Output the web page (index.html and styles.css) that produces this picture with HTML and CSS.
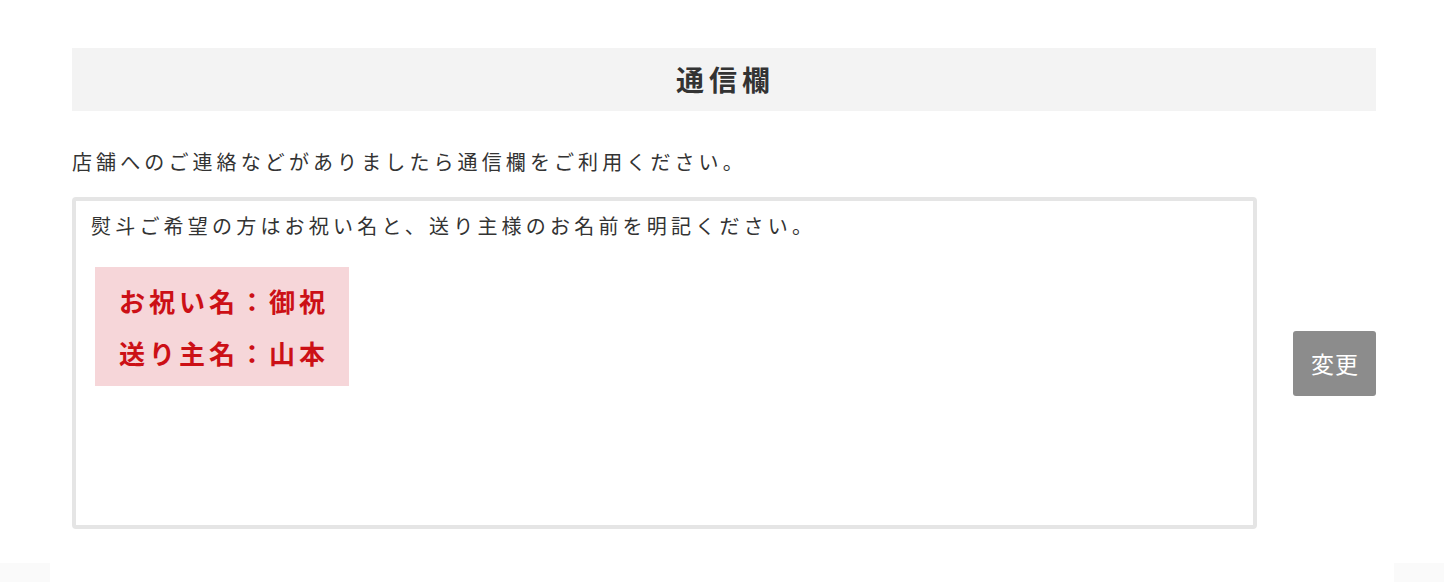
FILE: index.html
```html
<!DOCTYPE html>
<html lang="ja">
<head>
    <meta charset="UTF-8">
    <meta name="viewport" content="width=device-width, initial-scale=1.0">
    <title>通信欄</title>
    <link rel="stylesheet" href="styles.css">
</head>
<body>
    <div class="section">
        <h2 class="section-title">通信欄</h2>
        <p class="lead">店舗へのご連絡などがありましたら通信欄をご利用ください。</p>
        <div class="message-row">
            <div class="message-box">
                <p class="hint">熨斗ご希望の方はお祝い名と、送り主様のお名前を明記ください。</p>
                <div class="sample">
                    <p>お祝い名：御祝</p>
                    <p>送り主名：山本</p>
                </div>
            </div>
            <button class="change-btn">変更</button>
        </div>
    </div>
    <div class="foot">
        <span class="foot-block"></span>
        <span class="foot-block"></span>
    </div>
</body>
</html>
```

FILE: styles.css
```css
body{
    margin: 0;
    background: #fff;
    color: #333;
    font-family: "Noto Sans CJK JP", "Noto Sans", sans-serif;
}
.section{
    width: 1304px;
    margin: 48px 0 0 72px;
}
.section-title{
    margin: 0;
    height: 63px;
    line-height: 63px;
    background: #f3f3f3;
    text-align: center;
    font-size: 28px;
    font-weight: bold;
    letter-spacing: 5px;
    text-indent: 3px;
    color: #333;
}
.lead{
    margin: 36px 0 20px;
    font-size: 20px;
    line-height: 30px;
    letter-spacing: 4.1px;
}
.message-row{
    display: flex;
    align-items: center;
    gap: 36px;
}
.message-box{
    box-sizing: border-box;
    width: 1185px;
    height: 332px;
    border: 4px solid #e5e5e5;
    border-radius: 4px;
    padding: 10px 15px;
}
.hint{
    margin: 0;
    font-size: 20px;
    line-height: 30px;
    letter-spacing: 4.2px;
}
.sample{
    display: inline-block;
    margin: 26px 0 0 4px;
    padding: 8px 20px 7px 24px;
    background: #f6d6d9;
    color: #cc1016;
    font-size: 26px;
    font-weight: bold;
    letter-spacing: 4px;
}
.sample p{
    margin: 0;
    line-height: 52px;
}
.change-btn{
    width: 83px;
    height: 65px;
    padding: 0;
    border: none;
    border-radius: 3px;
    background: #8c8c8c;
    color: #fff;
    font-family: inherit;
    font-size: 23px;
    letter-spacing: 1px;
    text-indent: 1px;
}
.foot{
    display: flex;
    justify-content: space-between;
    margin-top: 34px;
}
.foot-block{
    width: 50px;
    height: 19px;
    background: #fafafa;
}
```
